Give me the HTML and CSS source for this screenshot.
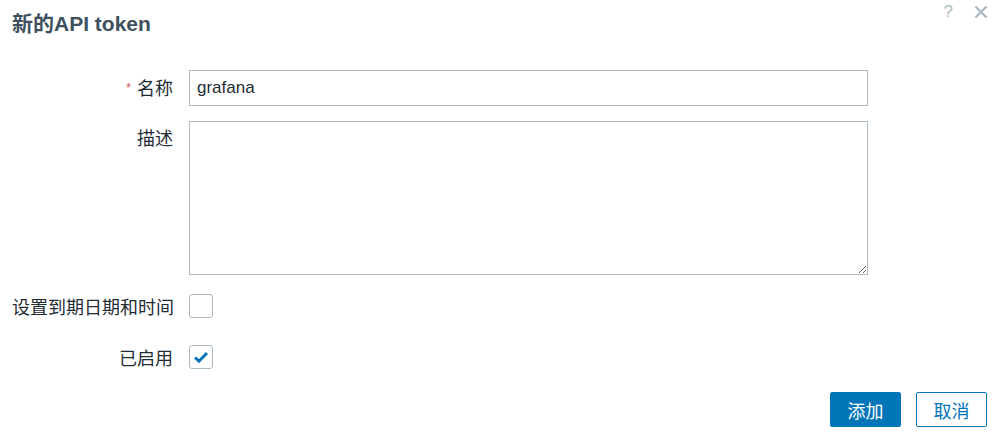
FILE: index.html
```html
<!DOCTYPE html>
<html lang="zh">
<head>
<meta charset="utf-8">
<title>新的API token</title>
<link rel="stylesheet" href="styles.css">
</head>
<body>
<div class="dialog">
  <div class="header">
    <h4 class="title">新的API token</h4>
    <div class="tools">
      <span class="help">?</span>
      <span class="close">
        <svg width="14" height="14" viewBox="0 0 14 14"><path d="M1.5 1.5 L12.5 12.5 M12.5 1.5 L1.5 12.5" stroke="currentColor" stroke-width="2.4" fill="none"/></svg>
      </span>
    </div>
  </div>
  <form class="form">
    <label class="label"><span class="req">*</span>名称</label>
    <div class="field"><input class="input" type="text" value="grafana"></div>

    <label class="label">描述</label>
    <div class="field"><textarea class="textarea"></textarea></div>

    <label class="label">设置到期日期和时间</label>
    <div class="field check-field"><span class="checkbox"></span></div>

    <label class="label">已启用</label>
    <div class="field check-field">
      <span class="checkbox">
        <svg width="16" height="14" viewBox="0 0 16 14"><path d="M2 7.5 L6 11.2 L14 3" stroke="#0275b8" stroke-width="3" fill="none" stroke-linecap="butt" stroke-linejoin="miter"/></svg>
      </span>
    </div>
  </form>
  <div class="footer">
    <button class="btn btn-primary" type="button">添加</button>
    <button class="btn btn-alt" type="button">取消</button>
  </div>
</div>
</body>
</html>
```

FILE: styles.css
```css
* { box-sizing: border-box; }
html, body {
  margin: 0;
  padding: 0;
  background: #ffffff;
}
body {
  font-family: "Liberation Sans", Arial, "Noto Sans CJK SC", sans-serif;
  color: #1f2c33;
  width: 1000px;
  height: 441px;
  overflow: hidden;
}
.dialog {
  padding: 0 12px;
}
.header {
  display: flex;
  justify-content: space-between;
  align-items: flex-start;
  height: 70px;
}
.title {
  margin: 0;
  padding-top: 10px;
  font-size: 21px;
  line-height: 28px;
  font-weight: bold;
  color: #3e4f5d;
}
.tools {
  display: flex;
  align-items: center;
  gap: 21px;
  padding-top: 3px;
  color: #acbbc2;
}
.help {
  font-size: 17px;
  line-height: 18px;
}
.close {
  display: flex;
  width: 14px;
  height: 18px;
  align-items: center;
}
.form {
  display: grid;
  grid-template-columns: 161px 679px;
  column-gap: 16px;
  row-gap: 15px;
  align-items: start;
}
.label {
  display: block;
  height: 36px;
  text-align: right;
  font-size: 18px;
  line-height: 36px;
  color: #1f2c33;
  white-space: nowrap;
}
.req {
  color: #e45959;
  font-size: 13px;
  margin-right: 6px;
  vertical-align: 3px;
}
.field {
  display: flex;
}
.input {
  width: 100%;
  height: 36px;
  border: 1px solid #acbbc2;
  border-radius: 0;
  padding: 0 7px;
  font-family: "Liberation Sans", Arial, sans-serif;
  font-size: 17px;
  color: #1f2c33;
  background: #fff;
  outline: none;
}
.textarea {
  width: 100%;
  height: 154px;
  border: 1px solid #acbbc2;
  border-radius: 0;
  padding: 6px 7px;
  font-family: "Liberation Sans", Arial, sans-serif;
  font-size: 17px;
  background: #fff;
  resize: vertical;
  outline: none;
  display: block;
  margin: 0;
}
.check-field {
  height: 36px;
  align-items: flex-start;
  padding-top: 4px;
}
.checkbox {
  width: 24px;
  height: 24px;
  border: 1px solid #acbbc2;
  border-radius: 3px;
  background: #fff;
  display: flex;
  align-items: center;
  justify-content: center;
}
.footer {
  display: flex;
  justify-content: flex-end;
  gap: 15px;
  margin-top: 15px;
  padding-right: 1px;
}
.btn {
  width: 71px;
  height: 35px;
  font-family: "Liberation Sans", Arial, "Noto Sans CJK SC", sans-serif;
  font-size: 18px;
  border-radius: 2px;
  cursor: pointer;
  padding: 0;
}
.btn-primary {
  background: #0275b8;
  border: 1px solid #0275b8;
  color: #ffffff;
}
.btn-alt {
  background: #ffffff;
  border: 1px solid #0275b8;
  color: #0275b8;
}
```
